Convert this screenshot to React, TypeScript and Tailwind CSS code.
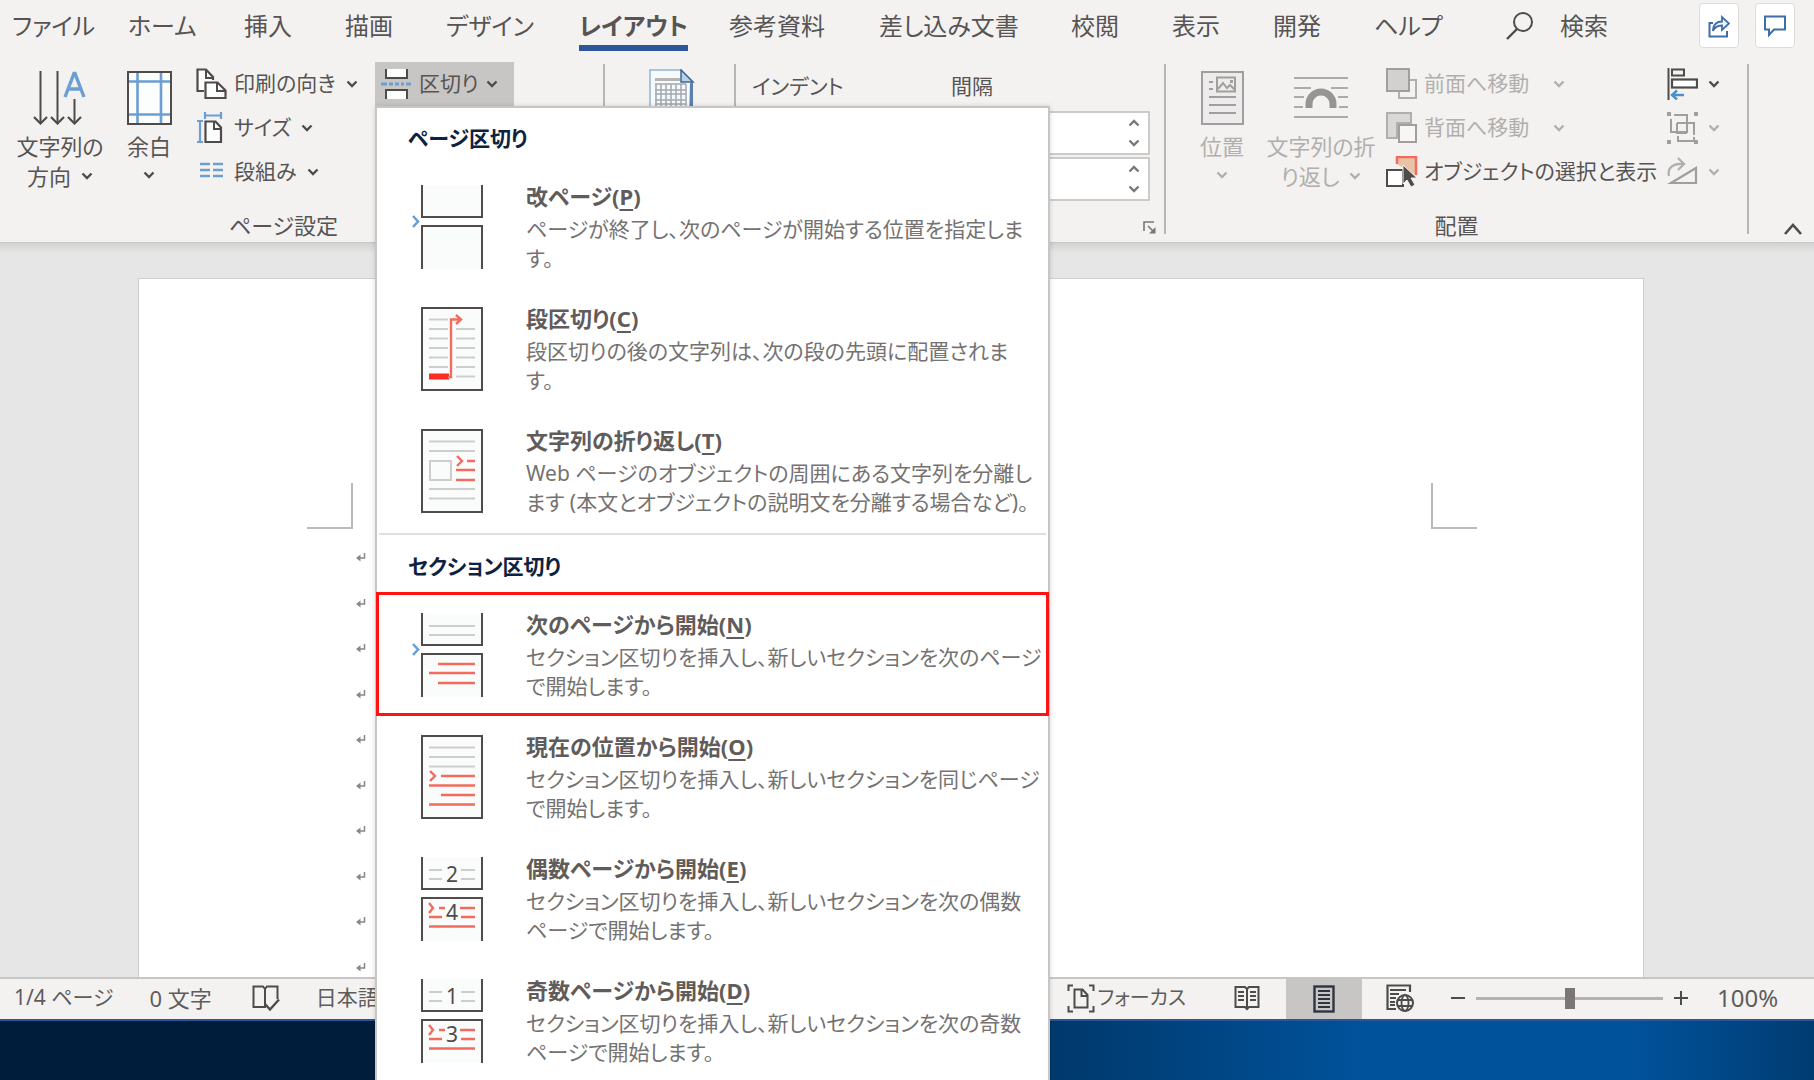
import type { ReactNode } from 'react'
import clsx from 'clsx'

const INK = '#4f4b4a'
const BLUE = '#6b9fd3'
const RED = '#f26b5e'
const GRAY = '#a19f9d'

type IconProps = { w: number; h: number; children: ReactNode }

const Icon = ({ w, h, children }: IconProps) => (
  <svg className="shrink-0" width={w} height={h} viewBox={`0 0 ${w} ${h}`} fill="none" aria-hidden="true">
    {children}
  </svg>
)

const Chevron = ({ color = INK }: { color?: string }) => (
  <Icon w={12} h={8}>
    <path d="M1.5 1.5L6 6L10.5 1.5" stroke={color} strokeWidth="2.4" />
  </Icon>
)

/* ---------- ribbon icons ---------- */

const TextDirectionIcon = () => (
  <Icon w={54} h={54}>
    <path d="M7.500 0V52M24.500 0V52M41.500 28V52" stroke={INK} strokeWidth="2" />
    <path d="M1 46l6.500 6.500L14 46M18 46l6.500 6.500L31 46M35 46l6.500 6.500L48 46" stroke={INK} strokeWidth="2.2" />
    <path d="M32 26L41 2.500h1L51 26M35 18h13" stroke={BLUE} strokeWidth="3.400" />
  </Icon>
)

const MarginsIcon = () => (
  <Icon w={45} h={54}>
    <rect x="1" y="1" width="43" height="52" fill="#fcfdfd" stroke={INK} strokeWidth="2" />
    <path d="M10.500 2v50M34 2v50M2 10.500h41M2 43.500h41" stroke={BLUE} strokeWidth="2.600" />
  </Icon>
)

const OrientationIcon = () => (
  <Icon w={32} h={32}>
    <path d="M8 23H1.500V1.500H10L17 9v3" fill="#fcfdfd" stroke={INK} strokeWidth="2.200" />
    <path d="M10 2v8h7" stroke={INK} strokeWidth="2" />
    <path d="M9.500 14.500h12l8 8V30h-20z" fill="#fcfdfd" stroke={INK} strokeWidth="2.200" />
    <path d="M21 15v8h8" stroke={INK} strokeWidth="2" />
  </Icon>
)

const SizeIcon = () => (
  <Icon w={32} h={32}>
    <path d="M9.500 9.500h10l5.500 6V30H9.500z" fill="#fcfdfd" stroke={INK} strokeWidth="2.200" />
    <path d="M18 10v7h7" stroke={INK} strokeWidth="2" />
    <path d="M9 3.500h16M9 0v7M25 0v7M4 9v20M1 9h6M1 30h6" stroke={BLUE} strokeWidth="2.200" />
  </Icon>
)

const ColumnsIcon = () => (
  <Icon w={32} h={24}>
    <path d="M4 4h10M4 10h10M4 16h10M17 4h10M17 10h10M17 16h10" stroke={BLUE} strokeWidth="2.400" />
  </Icon>
)

const BreaksIcon = () => (
  <Icon w={30} h={30}>
    <path d="M5 0v9h21V0" fill="#fcfdfd" stroke={INK} strokeWidth="2" />
    <path d="M5 30v-9h21v9" fill="#fcfdfd" stroke={INK} strokeWidth="2" />
    <path d="M0 15h6M8 15h4M14 15h4M20 15h3M25 15h5" stroke={BLUE} strokeWidth="3" />
  </Icon>
)

const ManuscriptIcon = () => (
  <Icon w={46} h={54}>
    <path d="M1 53V1h31l11 11v41z" fill="#f7fafc" stroke="#8fb4d8" strokeWidth="1.500" />
    <path d="M41 14h3v39h-4z" fill="#5b7fae" />
    <path d="M32 1v12h12z" fill="#b7d3ec" stroke="#44648f" strokeWidth="1.500" />
    <path d="M6 9h25v3H6z" fill="#b5b5b5" />
    <path
      d="M6 15h31M6 21h31M6 25h31M6 31h31M6 35h31M6 41h31M7 15v26M12 15v26M17 15v26M22 15v26M27 15v26M32 15v26M37 15v26"
      stroke="#a3a8ad"
      strokeWidth="1.500"
    />
  </Icon>
)

const PositionIcon = () => (
  <Icon w={43} h={54}>
    <rect x="1" y="1" width="41" height="52" fill="#edebeb" stroke={GRAY} strokeWidth="2" />
    <rect x="16" y="6.500" width="18" height="14" stroke={GRAY} strokeWidth="2" />
    <path d="M17 18l5-6 4 5 3-3 5 5" stroke={GRAY} strokeWidth="2" />
    <path d="M29 9h3v3h-3z" fill={GRAY} />
    <path d="M8 11h4M8 18h4M8 26h27M8 34h27M8 42h27" stroke={GRAY} strokeWidth="2" />
  </Icon>
)

const WrapIcon = () => (
  <Icon w={54} h={54}>
    <path d="M0 7h54M0 17h17M37 17h17M0 26h10M44 26h10M0 36h9M45 36h9M0 46h54" stroke="#adabaa" strokeWidth="2" />
    <path d="M15 37v-4a12 12 0 0 1 24 0v4" stroke="#979594" strokeWidth="7" />
  </Icon>
)

const BringForwardIcon = () => (
  <Icon w={32} h={32}>
    <path d="M24 12h6v18H13v-6" stroke="#b1afad" strokeWidth="2" />
    <rect x="1" y="1" width="22" height="22" fill="#d3d1d0" stroke={GRAY} strokeWidth="2" />
  </Icon>
)

const SendBackwardIcon = () => (
  <Icon w={32} h={32}>
    <path d="M1 1h24v10H11v15H1z" fill="#dad8d7" stroke="#b1afad" strokeWidth="2" />
    <rect x="13" y="13" width="17" height="17" fill="#f7f6f5" stroke={GRAY} strokeWidth="2" />
  </Icon>
)

const SelectionPaneIcon = () => (
  <Icon w={32} h={32}>
    <path d="M11 8V1h19v18" fill="#e8c3a4" stroke={RED} strokeWidth="2.500" />
    <rect x="1" y="14" width="16" height="16" fill="#fff" stroke={INK} strokeWidth="2" />
    <path d="M17 9v19l4-4 4 7 4-2-4-7h6z" fill={INK} stroke="#f3f2f1" strokeWidth="1" />
  </Icon>
)

const AlignIcon = () => (
  <Icon w={31} h={32}>
    <path d="M1.500 0v32" stroke={INK} strokeWidth="2" />
    <rect x="5" y="1.500" width="12" height="6" stroke={INK} strokeWidth="2" />
    <rect x="5" y="11.500" width="25" height="8" fill="#fff" stroke={INK} strokeWidth="2.200" />
    <path d="M17 27H6M10 22.500L5 27l5 4.500" stroke="#4a90cf" strokeWidth="2.400" />
  </Icon>
)

const GroupIcon = () => (
  <Icon w={31} h={32}>
    <path d="M0 0h4v4H0zM27 0h4v4h-4zM0 28h4v4H0zM27 28h4v4h-4z" fill={GRAY} />
    <path d="M7 3h13v17H4V7M10 11h17v12M10 11v10h10M27 25v4H11v-5" stroke={GRAY} strokeWidth="2" />
  </Icon>
)

const RotateIcon = () => (
  <Icon w={31} h={32}>
    <path d="M2 20c-2-8 4-13 14-12M11 2l6 6-6 6" stroke="#b1afad" strokeWidth="2.200" />
    <path d="M29 12v15H4z" stroke={GRAY} strokeWidth="2.200" />
  </Icon>
)

const SearchIcon = () => (
  <Icon w={28} h={30}>
    <circle cx="17" cy="11" r="9" stroke={INK} strokeWidth="2" />
    <path d="M11 18L1 28" stroke={INK} strokeWidth="2.400" />
  </Icon>
)

const ShareIcon = () => (
  <Icon w={22} h={24}>
    <path d="M5 9H1.500v13.500H19V17" stroke="#3e6da9" strokeWidth="2" />
    <path d="M5 17c0-7 4-9.500 9-9.500V3l7 6.500-7 6.500v-4.500c-4 0-7 1-9 5.500z" fill="#eef4fa" stroke="#3e6da9" strokeWidth="1.800" />
  </Icon>
)

const CommentIcon = () => (
  <Icon w={22} h={22}>
    <path d="M1 1.500h20v13H10L5 20v-5.500H1z" stroke="#3e6da9" strokeWidth="2" />
  </Icon>
)

/* ---------- menu icons ---------- */

const PAPER = '#fafcfb'

const SheetPair = ({ pointer, children }: { pointer?: boolean; children?: ReactNode }) => (
  <Icon w={72} h={84}>
    {pointer && <path d="M2 31l5 5.500L2 42" stroke={BLUE} strokeWidth="2.600" />}
    <path d="M11 0v32h60V0" fill={PAPER} stroke={INK} strokeWidth="2" />
    <path d="M11 84V41h60v43" fill={PAPER} stroke={INK} strokeWidth="2" />
    {children}
  </Icon>
)

const Sheet = ({ children }: { children: ReactNode }) => (
  <Icon w={72} h={84}>
    <rect x="11" y="1" width="60" height="82" fill={PAPER} stroke={INK} strokeWidth="2" />
    {children}
  </Icon>
)

const PageBreakIcon = () => <SheetPair pointer />

const ColumnBreakIcon = () => (
  <Sheet>
    <path
      d="M18 12.500h19M18 22h19M18 31.500h19M18 41h19M18 50.500h19M18 60h19M45 22h19M45 31.500h19M45 41h19M45 50.500h19M45 60h19M45 69.500h19"
      stroke="#cfcdcc"
      strokeWidth="2"
    />
    <path d="M18 69.500h20" stroke="#ff2a1f" strokeWidth="6" />
    <path d="M37 70h3V12.500h8M45 8l5 4.500-5 4.500" stroke={RED} strokeWidth="2.400" />
  </Sheet>
)

const TextWrapBreakIcon = () => (
  <Sheet>
    <path d="M18 12.500h46M18 22h46M18 60h46M18 69.500h46" stroke="#cfcdcc" strokeWidth="2" />
    <rect x="19" y="32" width="21" height="19" stroke="#cfcdcc" strokeWidth="2" />
    <path d="M46 27l5 5-5 5M56 32h8M45 41h19M45 51h19" stroke={RED} strokeWidth="2.400" />
  </Sheet>
)

const NextPageIcon = () => (
  <SheetPair pointer>
    <path d="M18 13h46M18 22h46" stroke="#cfcdcc" strokeWidth="2" />
    <path d="M27 51h37M18 60h46M27 70h37" stroke={RED} strokeWidth="2.400" />
  </SheetPair>
)

const ContinuousIcon = () => (
  <Sheet>
    <path d="M18 12.500h46M18 22h46M18 31.500h46" stroke="#cfcdcc" strokeWidth="2" />
    <path d="M19 36l5 5-5 5M30 41h34M18 50.500h46M30 60h34M18 69.500h46" stroke={RED} strokeWidth="2.400" />
  </Sheet>
)

const NumberedPagesIcon = ({ top, bottom }: { top: string; bottom: string }) => (
  <SheetPair>
    <path d="M18 13h13M50 13h14M18 22h13M50 22h14" stroke="#cfcdcc" strokeWidth="2" />
    <path d="M18 46l4 5-4 5M28 51h6M49 51h15M18 60h13M50 60h14M18 69.500h46" stroke={RED} strokeWidth="2.400" />
    <text x="41" y="25" textAnchor="middle" fontSize="21" fill={INK}>
      {top}
    </text>
    <text x="41" y="63" textAnchor="middle" fontSize="21" fill={INK}>
      {bottom}
    </text>
  </SheetPair>
)

/* ---------- ribbon ---------- */

const tabs = [
  { label: 'ファイル', width: 'w-[116px]' },
  { label: 'ホーム', width: 'w-[116px]' },
  { label: '挿入', width: 'w-[101px]' },
  { label: '描画', width: 'w-[101px]' },
  { label: 'デザイン', width: 'w-[133px]' },
  { label: 'レイアウト', width: 'w-[150px]', active: true },
  { label: '参考資料', width: 'w-[150px]' },
  { label: '差し込み文書', width: 'w-[192px]' },
  { label: '校閲', width: 'w-[101px]' },
  { label: '表示', width: 'w-[101px]' },
  { label: '開発', width: 'w-[101px]' },
  { label: 'ヘルプ', width: 'w-[101px]' },
]

const TabBar = () => (
  <nav className="flex h-[52px] items-start pl-3 pr-[19px] text-2xl leading-8">
    <div className="flex pt-2.5">
      {tabs.map(({ label, width, active }) => (
        <div key={label} className={clsx('shrink-0', width)}>
          <button
            className={clsx(
              'h-[41px] whitespace-nowrap',
              active ? 'border-b-6 border-[#2b579a] pb-[3px] font-bold' : 'pb-[9px]',
            )}
          >
            {label}
          </button>
        </div>
      ))}
    </div>
    <button className="ml-auto flex items-center gap-[26px] whitespace-nowrap pt-2.5">
      <SearchIcon />
      検索
    </button>
    <div className="ml-[91px] flex gap-4 pt-[3px]">
      <button
        className="flex h-[45px] w-10 items-center justify-center rounded-sm border border-[#dddbd9] bg-white"
        aria-label="共有"
      >
        <ShareIcon />
      </button>
      <button
        className="flex h-[45px] w-10 items-center justify-center rounded-sm border border-[#dddbd9] bg-white"
        aria-label="コメント"
      >
        <CommentIcon />
      </button>
    </div>
  </nav>
)

const Divider = () => <div className="mb-2 mt-3 w-0.5 shrink-0 bg-[#b8b5b3]" />

type BigButtonProps = { icon: ReactNode; className: string; disabled?: boolean; children: ReactNode }

const BigButton = ({ icon, className, disabled, children }: BigButtonProps) => (
  <button
    disabled={disabled}
    className={clsx('flex shrink-0 flex-col items-center gap-1.5 whitespace-nowrap pt-[9px] leading-[30px]', className)}
  >
    {icon}
    <span className="flex flex-col items-center">{children}</span>
  </button>
)

type RowButtonProps = { icon: ReactNode; label?: string; chevron?: string; wide?: boolean; disabled?: boolean }

const RowButton = ({ icon, label, chevron, wide, disabled }: RowButtonProps) => (
  <button
    disabled={disabled}
    className={clsx(
      'flex h-11 items-center whitespace-nowrap px-1.5 text-[21px]',
      wide ? 'gap-6' : 'gap-2.5',
      disabled && 'text-[#b1afad]',
    )}
  >
    <span className="flex items-center gap-1.5">
      {icon}
      {label}
    </span>
    {chevron && <Chevron color={chevron} />}
  </button>
)

const Spinner = ({ label }: { label: string }) => (
  <div className="flex h-11 border-2 border-[#cdcbc9] bg-white">
    <input aria-label={label} className="min-w-0 flex-1 bg-transparent px-2 outline-none" />
    <div className="flex w-7 flex-col items-center justify-between py-1.5">
      <button aria-label={`${label} 増`} className="flex rotate-180">
        <Chevron color="#7a7776" />
      </button>
      <button aria-label={`${label} 減`} className="flex">
        <Chevron color="#7a7776" />
      </button>
    </div>
  </div>
)

const GroupLabel = ({ children, className }: { children: ReactNode; className?: string }) => (
  <div className={clsx('text-center leading-[30px]', className)}>{children}</div>
)

const Ribbon = () => (
  <div className="flex h-[191px] border-b border-[#c8c6c4] text-[22px]">
    <section className="flex w-[603px] shrink-0 flex-col justify-between pb-0.5 pl-3 pt-2.5">
      <div className="flex items-start">
        <BigButton icon={<TextDirectionIcon />} className="w-24">
          <span>文字列の</span>
          <span className="flex items-center gap-2.5">
            方向 <Chevron />
          </span>
        </BigButton>
        <BigButton icon={<MarginsIcon />} className="w-[82px]">
          <span>余白</span>
          <span className="flex h-7 items-center">
            <Chevron />
          </span>
        </BigButton>
        <div className="flex w-[185px] flex-col items-start">
          <RowButton icon={<OrientationIcon />} label="印刷の向き" chevron={INK} />
          <RowButton icon={<SizeIcon />} label="サイズ" chevron={INK} />
          <RowButton icon={<ColumnsIcon />} label="段組み" chevron={INK} />
        </div>
        <div className="relative">
          <button
            className="flex h-11 w-[139px] items-center gap-2 whitespace-nowrap bg-[#c8c6c4] pl-1.5 text-[21px]"
            aria-expanded="true"
            aria-haspopup="menu"
          >
            <BreaksIcon />
            区切り
            <Chevron />
          </button>
          <BreaksMenu />
        </div>
      </div>
      <GroupLabel className="pr-12">ページ設定</GroupLabel>
    </section>
    <Divider />
    <section className="w-[129px] shrink-0 pt-[17px]">
      <button aria-label="原稿用紙設定" className="ml-11">
        <ManuscriptIcon />
      </button>
    </section>
    <Divider />
    <section className="flex w-[428px] shrink-0 flex-col justify-between pl-4 pr-3.5 pt-2.5 text-[21px]">
      <div className="grid grid-cols-2">
        <div className="h-[49px] pt-[9px]">インデント</div>
        <div>
          <div className="h-[49px] pt-[9px]">間隔</div>
          <div className="flex flex-col gap-0.5">
            <Spinner label="前" />
            <Spinner label="後" />
          </div>
        </div>
      </div>
      <button aria-label="段落の設定" className="mb-2 -mr-1.5 self-end">
        <Icon w={13} h={13}>
          <path d="M1 10V1h10M5 5l5 5" stroke="#7a7776" strokeWidth="1.600" />
          <path d="M12.500 6v6.500H6z" fill="#7a7776" />
        </Icon>
      </button>
    </section>
    <Divider />
    <section className="flex w-[581px] shrink-0 flex-col justify-between pb-0.5 pt-2.5">
      <div className="flex items-start pl-3">
        <BigButton icon={<PositionIcon />} className="w-[88px] text-[#b1afad]" disabled>
          <span>位置</span>
          <span className="flex h-7 items-center">
            <Chevron color="#b1afad" />
          </span>
        </BigButton>
        <BigButton icon={<WrapIcon />} className="w-[110px] text-[#b1afad]" disabled>
          <span>文字列の折</span>
          <span className="flex items-center gap-2.5">
            り返し <Chevron color="#b1afad" />
          </span>
        </BigButton>
        <div className="ml-1 flex w-[281px] flex-col items-start">
          <RowButton icon={<BringForwardIcon />} label="前面へ移動" chevron="#b1afad" wide disabled />
          <RowButton icon={<SendBackwardIcon />} label="背面へ移動" chevron="#b1afad" wide disabled />
          <RowButton icon={<SelectionPaneIcon />} label="オブジェクトの選択と表示" />
        </div>
        <div className="flex flex-col">
          <RowButton icon={<AlignIcon />} chevron={INK} />
          <RowButton icon={<GroupIcon />} chevron="#b1afad" disabled />
          <RowButton icon={<RotateIcon />} chevron="#b1afad" disabled />
        </div>
      </div>
      <GroupLabel>配置</GroupLabel>
    </section>
    <Divider />
    <button aria-label="リボンを折りたたむ" className="mb-1.5 ml-auto mr-3 self-end">
      <Icon w={18} h={14}>
        <path d="M1 12l8-9 8 9" stroke={INK} strokeWidth="2.600" />
      </Icon>
    </button>
  </div>
)

/* ---------- breaks menu ---------- */

type BreakItem = { title: string; accessKey: string; lines: string[]; icon: ReactNode; selected?: boolean }

const pageBreaks: BreakItem[] = [
  {
    title: '改ページ',
    accessKey: 'P',
    lines: ['ページが終了し、次のページが開始する位置を指定しま', 'す。'],
    icon: <PageBreakIcon />,
  },
  {
    title: '段区切り',
    accessKey: 'C',
    lines: ['段区切りの後の文字列は、次の段の先頭に配置されま', 'す。'],
    icon: <ColumnBreakIcon />,
  },
  {
    title: '文字列の折り返し',
    accessKey: 'T',
    lines: ['Web ページのオブジェクトの周囲にある文字列を分離し', 'ます (本文とオブジェクトの説明文を分離する場合など)。'],
    icon: <TextWrapBreakIcon />,
  },
]

const sectionBreaks: BreakItem[] = [
  {
    title: '次のページから開始',
    accessKey: 'N',
    lines: ['セクション区切りを挿入し、新しいセクションを次のページ', 'で開始します。'],
    icon: <NextPageIcon />,
    selected: true,
  },
  {
    title: '現在の位置から開始',
    accessKey: 'O',
    lines: ['セクション区切りを挿入し、新しいセクションを同じページ', 'で開始します。'],
    icon: <ContinuousIcon />,
  },
  {
    title: '偶数ページから開始',
    accessKey: 'E',
    lines: ['セクション区切りを挿入し、新しいセクションを次の偶数', 'ページで開始します。'],
    icon: <NumberedPagesIcon top="2" bottom="4" />,
  },
  {
    title: '奇数ページから開始',
    accessKey: 'D',
    lines: ['セクション区切りを挿入し、新しいセクションを次の奇数', 'ページで開始します。'],
    icon: <NumberedPagesIcon top="1" bottom="3" />,
  },
]

const MenuItem = ({ title, accessKey, lines, icon, selected }: BreakItem) => (
  <button
    role="menuitem"
    className={clsx(
      'flex h-[122px] w-full items-start gap-[43px] whitespace-nowrap pl-[34px] text-left',
      selected && 'outline-3 -outline-offset-2 outline-[#ff1212]',
    )}
  >
    <span className="pt-5">{icon}</span>
    <span className="flex flex-col pt-[15px] text-[21px] leading-[29px] text-[#757271]">
      <span className="mb-[3px] text-[22px] font-bold leading-8 text-[#5f5c5b]">
        {title}(<u className="underline-offset-4">{accessKey}</u>)
      </span>
      {lines.map(line => (
        <span key={line}>{line}</span>
      ))}
    </span>
  </button>
)

const MenuHeading = ({ children }: { children: ReactNode }) => (
  <div className="flex h-14 items-center pl-[31px] pt-1 text-[21px] font-bold text-[#0d2240]">{children}</div>
)

const BreaksMenu = () => (
  <div
    role="menu"
    className="absolute left-0 top-full z-10 w-[675px] border-2 border-[#c8c6c4] bg-white pt-px shadow-[0_0_5px_rgba(0,0,0,0.15)]"
  >
    <MenuHeading>ページ区切り</MenuHeading>
    {pageBreaks.map(item => (
      <MenuItem key={item.accessKey} {...item} />
    ))}
    <div className="mx-0.5 my-0.5 h-0.5 bg-[#e1dfdd]" />
    <MenuHeading>セクション区切り</MenuHeading>
    {sectionBreaks.map(item => (
      <MenuItem key={item.accessKey} {...item} />
    ))}
  </div>
)

/* ---------- document ---------- */

const ReturnMark = () => (
  <Icon w={10} h={10}>
    <path d="M8.500 1v5H2" stroke="#8a8886" strokeWidth="1.500" />
    <path d="M0 6l4.500-3.500v7z" fill="#8a8886" />
  </Icon>
)

const Document = () => (
  <main className="flex min-h-0 flex-1 overflow-hidden bg-[#e6e6e6] bg-linear-to-b from-[#d3d2d1] to-[#e6e6e6] to-[10px] pl-[138px] pr-[170px] pt-[35px]">
    <div className="flex flex-1 items-start justify-between border border-b-0 border-[#d0cecd] bg-white pt-[204px]">
      <div className="ml-[168px]">
        <div className="h-[46px] w-[46px] border-b-2 border-r-2 border-[#bdbbba]" />
        <div className="ml-[49px] flex flex-col pt-[5px]">
          {Array.from({ length: 10 }, (_, i) => (
            <div key={i} className="flex h-[45px] items-center odd:h-[46px]">
              <ReturnMark />
            </div>
          ))}
        </div>
      </div>
      <div className="mr-[166px] h-[46px] w-[46px] border-b-2 border-l-2 border-[#bdbbba]" />
    </div>
  </main>
)

/* ---------- status bar ---------- */

const ProofIcon = () => (
  <Icon w={28} h={27}>
    <path d="M13 22H1.500V1.500H11L13 4l2-2.500h10.500V14M13 4v19" stroke={INK} strokeWidth="2" />
    <path d="M13 19l5 5.500L27 14.500" stroke={INK} strokeWidth="2.400" />
  </Icon>
)

const FocusIcon = () => (
  <Icon w={28} h={29}>
    <path d="M6 1.500H1.500V7M22 1.500h4.500V7M6 27.500H1.500V22M22 27.500h4.500V22" stroke={INK} strokeWidth="2" />
    <path d="M7.500 5.500h8l5 5.500v12.500h-13zM14.500 6v6h6" stroke={INK} strokeWidth="2" />
  </Icon>
)

const ReadModeIcon = () => (
  <Icon w={26} h={26}>
    <path d="M13 4l-2-2H1.500v20H11l2 2 2-2h9.500V2H15zM13 4v20" stroke={INK} strokeWidth="2" />
    <path d="M4 7h6M4 11h6M4 15h6M16 7h6M16 11h6M16 15h6" stroke={INK} strokeWidth="2" />
  </Icon>
)

const PrintLayoutIcon = () => (
  <Icon w={22} h={28}>
    <rect x="1.500" y="1.500" width="19" height="25" stroke="#2e3440" strokeWidth="2.400" />
    <path d="M5 6h12M5 10h12M5 14h12M5 18h12M5 22h12" stroke="#2e3440" strokeWidth="2" />
  </Icon>
)

const WebLayoutIcon = () => (
  <Icon w={28} h={29}>
    <path d="M10 25H1.500V1.500H24V8" stroke={INK} strokeWidth="2.200" />
    <path d="M4 6h16M4 10h9M4 14h6M4 18h5M4 21h5" stroke={INK} strokeWidth="1.800" />
    <circle cx="19" cy="19" r="8" fill="#f3f2f1" stroke={INK} strokeWidth="2" />
    <ellipse cx="19" cy="19" rx="3.500" ry="8" stroke={INK} strokeWidth="1.800" />
    <path d="M12 16h14M12 22h14" stroke={INK} strokeWidth="1.800" />
  </Icon>
)

const StatusBar = () => (
  <footer className="h-[42px] shrink-0 border-t-2 border-[#c8c6c4] bg-[#f3f2f1]">
    <div className="flex h-[38px] items-center whitespace-nowrap pl-3.5 pr-[33px] text-[21px] text-[#5f5c5b]">
      <span>1/4 ページ</span>
      <span className="ml-9 text-[22px]">0 文字</span>
      <button aria-label="文章校正" className="ml-10">
        <ProofIcon />
      </button>
      <span className="ml-9">日本語</span>
      <button className="ml-auto flex items-center gap-0.5 text-xl">
        <FocusIcon />
        フォーカス
      </button>
      <button aria-label="閲覧モード" className="ml-12">
        <ReadModeIcon />
      </button>
      <button
        aria-label="印刷レイアウト"
        className="ml-[26px] flex h-10 w-[76px] items-center justify-center self-start bg-[#c8c6c4]"
      >
        <PrintLayoutIcon />
      </button>
      <button aria-label="Web レイアウト" className="ml-6">
        <WebLayoutIcon />
      </button>
      <button aria-label="縮小" className="ml-9">
        <Icon w={16} h={16}>
          <path d="M1 8h14" stroke={INK} strokeWidth="2" />
        </Icon>
      </button>
      <input
        type="range"
        aria-label="ズーム"
        defaultValue={50}
        className="ml-2.5 h-[22px] w-[187px] appearance-none bg-transparent [&::-webkit-slider-runnable-track]:h-[3px] [&::-webkit-slider-runnable-track]:bg-[#b5b3b1] [&::-webkit-slider-thumb]:-mt-[9px] [&::-webkit-slider-thumb]:h-[21px] [&::-webkit-slider-thumb]:w-2.5 [&::-webkit-slider-thumb]:appearance-none [&::-webkit-slider-thumb]:bg-[#7b7776]"
      />
      <button aria-label="拡大" className="ml-2.5">
        <Icon w={16} h={16}>
          <path d="M1 8h14M8 1v14" stroke={INK} strokeWidth="2" />
        </Icon>
      </button>
      <span className="ml-7 w-16 text-2xl">100%</span>
    </div>
  </footer>
)

export default function App() {
  return (
    <div
      lang="ja"
      className="flex h-screen flex-col overflow-hidden bg-[#f3f2f1] font-['Noto_Sans','Noto_Sans_CJK_JP',sans-serif] text-[#575453] [font-feature-settings:'palt']"
    >
      <header>
        <TabBar />
        <Ribbon />
      </header>
      <Document />
      <StatusBar />
      <div className="h-[61px] shrink-0 border-t-2 border-[#2b579a] bg-[linear-gradient(90deg,#001d3b_0%,#001d3b_22%,#003a6e_59%,#00529b_75%,#00529b_90%,#003c72_100%)]" />
    </div>
  )
}
